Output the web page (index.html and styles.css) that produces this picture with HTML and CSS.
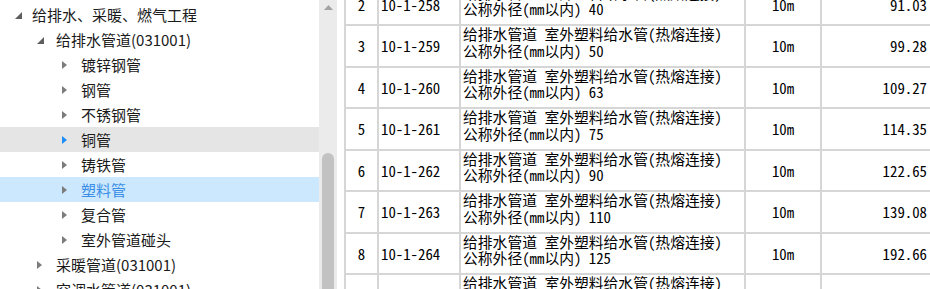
FILE: index.html
```html
<!DOCTYPE html>
<html lang="zh-CN">
<head>
<meta charset="utf-8">
<title>定额树</title>
<link rel="stylesheet" href="styles.css">
</head>
<body>
<div class="app">
  <div class="tree">
    <div class="node lv0"><span class="arrow"><svg class="exp" width="7" height="7" viewBox="0 0 7 7"><path d="M7 0V7H0Z"/></svg></span><span class="label">给排水、采暖、燃气工程</span></div>
    <div class="node lv1"><span class="arrow"><svg class="exp" width="7" height="7" viewBox="0 0 7 7"><path d="M7 0V7H0Z"/></svg></span><span class="label">给排水管道(031001)</span></div>
    <div class="node lv2"><span class="arrow"><svg class="col" width="5" height="8" viewBox="0 0 5 8"><path d="M0 0L5 4L0 8Z"/></svg></span><span class="label">镀锌钢管</span></div>
    <div class="node lv2"><span class="arrow"><svg class="col" width="5" height="8" viewBox="0 0 5 8"><path d="M0 0L5 4L0 8Z"/></svg></span><span class="label">钢管</span></div>
    <div class="node lv2"><span class="arrow"><svg class="col" width="5" height="8" viewBox="0 0 5 8"><path d="M0 0L5 4L0 8Z"/></svg></span><span class="label">不锈钢管</span></div>
    <div class="node lv2 hover"><span class="arrow"><svg class="col" width="5" height="8" viewBox="0 0 5 8"><path d="M0 0L5 4L0 8Z"/></svg></span><span class="label">铜管</span></div>
    <div class="node lv2"><span class="arrow"><svg class="col" width="5" height="8" viewBox="0 0 5 8"><path d="M0 0L5 4L0 8Z"/></svg></span><span class="label">铸铁管</span></div>
    <div class="node lv2 sel"><span class="arrow"><svg class="col" width="5" height="8" viewBox="0 0 5 8"><path d="M0 0L5 4L0 8Z"/></svg></span><span class="label">塑料管</span></div>
    <div class="node lv2"><span class="arrow"><svg class="col" width="5" height="8" viewBox="0 0 5 8"><path d="M0 0L5 4L0 8Z"/></svg></span><span class="label">复合管</span></div>
    <div class="node lv2"><span class="arrow"><svg class="col" width="5" height="8" viewBox="0 0 5 8"><path d="M0 0L5 4L0 8Z"/></svg></span><span class="label">室外管道碰头</span></div>
    <div class="node lv1"><span class="arrow"><svg class="col" width="5" height="8" viewBox="0 0 5 8"><path d="M0 0L5 4L0 8Z"/></svg></span><span class="label">采暖管道(031001)</span></div>
    <div class="node lv1"><span class="arrow"><svg class="col" width="5" height="8" viewBox="0 0 5 8"><path d="M0 0L5 4L0 8Z"/></svg></span><span class="label">空调水管道(031001)</span></div>
  </div>
  <div class="scroll">
    <svg class="up" width="9" height="5" viewBox="0 0 9 5"><path d="M0 5L4.5 0L9 5Z"/></svg>
    <div class="thumb"></div>
  </div>
  <div class="gap"></div>
  <div class="grid">
    <div class="row"><div class="c-no">2</div><div class="c-code">10-1-258</div><div class="c-desc">给排水管道 室外塑料给水管(热熔连接)<br>公称外径(mm以内) 40</div><div class="c-unit">10m</div><div class="c-price">91.03</div></div>
    <div class="row"><div class="c-no">3</div><div class="c-code">10-1-259</div><div class="c-desc">给排水管道 室外塑料给水管(热熔连接)<br>公称外径(mm以内) 50</div><div class="c-unit">10m</div><div class="c-price">99.28</div></div>
    <div class="row"><div class="c-no">4</div><div class="c-code">10-1-260</div><div class="c-desc">给排水管道 室外塑料给水管(热熔连接)<br>公称外径(mm以内) 63</div><div class="c-unit">10m</div><div class="c-price">109.27</div></div>
    <div class="row"><div class="c-no">5</div><div class="c-code">10-1-261</div><div class="c-desc">给排水管道 室外塑料给水管(热熔连接)<br>公称外径(mm以内) 75</div><div class="c-unit">10m</div><div class="c-price">114.35</div></div>
    <div class="row"><div class="c-no">6</div><div class="c-code">10-1-262</div><div class="c-desc">给排水管道 室外塑料给水管(热熔连接)<br>公称外径(mm以内) 90</div><div class="c-unit">10m</div><div class="c-price">122.65</div></div>
    <div class="row"><div class="c-no">7</div><div class="c-code">10-1-263</div><div class="c-desc">给排水管道 室外塑料给水管(热熔连接)<br>公称外径(mm以内) 110</div><div class="c-unit">10m</div><div class="c-price">139.08</div></div>
    <div class="row"><div class="c-no">8</div><div class="c-code">10-1-264</div><div class="c-desc">给排水管道 室外塑料给水管(热熔连接)<br>公称外径(mm以内) 125</div><div class="c-unit">10m</div><div class="c-price">192.66</div></div>
    <div class="row"><div class="c-no">9</div><div class="c-code">10-1-265</div><div class="c-desc">给排水管道 室外塑料给水管(热熔连接)<br>公称外径(mm以内) 140</div><div class="c-unit">10m</div><div class="c-price">233.68</div></div>
  </div>
</div>
</body>
</html>
```
FILE: styles.css
```css
html, body {
  margin: 0;
  padding: 0;
  background: #ffffff;
}
body {
  width: 930px;
  height: 289px;
  overflow: hidden;
}
.app {
  display: flex;
  height: 289px;
  overflow: hidden;
}

/* tree */
.tree {
  flex: none;
  width: 319px;
  padding-top: 2px;
  font-family: "Noto Sans CJK SC", "Noto Sans", sans-serif;
  font-size: 15px;
  color: #1a1a1a;
}
.node {
  height: 25px;
  display: flex;
  align-items: center;
  white-space: nowrap;
}
.node.hover { background: #e5e5e5; }
.node.sel { background: #cce8ff; color: #3a8ee6; }
.lv0 { padding-left: 15px; }
.lv1 { padding-left: 37px; }
.lv2 { padding-left: 62px; }
.arrow {
  flex: none;
  width: 19px;
  display: flex;
  align-items: center;
}
.lv0 .arrow { width: 17px; }
.arrow svg { display: block; }
.arrow .exp { fill: #5e5e5e; margin-top: 2px; }
.arrow .col { fill: #7c7c7c; }
.hover .arrow .col { fill: #1e8ef5; }

/* scrollbar */
.scroll {
  flex: none;
  width: 18px;
  background: #ebebeb;
  display: flex;
  flex-direction: column;
  align-items: center;
}
.scroll .up {
  display: block;
  margin-top: 5px;
  fill: #a3a3a3;
  flex: none;
}
.thumb {
  flex: none;
  width: 12px;
  height: 200px;
  margin-top: 143px;
  background: #c2c2c2;
  border-radius: 6px;
}
.gap { flex: none; width: 7px; }

/* grid */
.grid {
  flex: none;
  width: 600px;
  margin-top: -15.5px;
  font-family: "Noto Sans Mono CJK SC", "Noto Sans CJK SC", monospace;
  font-size: 14.8px;
  color: #000;
}
.row {
  display: grid;
  grid-template-columns: 33px 82px 285px 76px 112px;
  height: 41.5px;
  box-sizing: border-box;
  border-bottom: 2px solid #d6d6d6;
}
.row > div {
  border-left: 2px solid #d6d6d6;
  display: flex;
  align-items: center;
  white-space: nowrap;
  overflow: hidden;
}
.c-no { justify-content: center; }
.c-code { padding-left: 2px; }
.row > .c-desc {
  display: block;
  padding: 0 0 0 2px;
  line-height: 16.5px;
}
.c-unit { justify-content: center; }
.c-price { justify-content: flex-end; padding-right: 5px; }
```
